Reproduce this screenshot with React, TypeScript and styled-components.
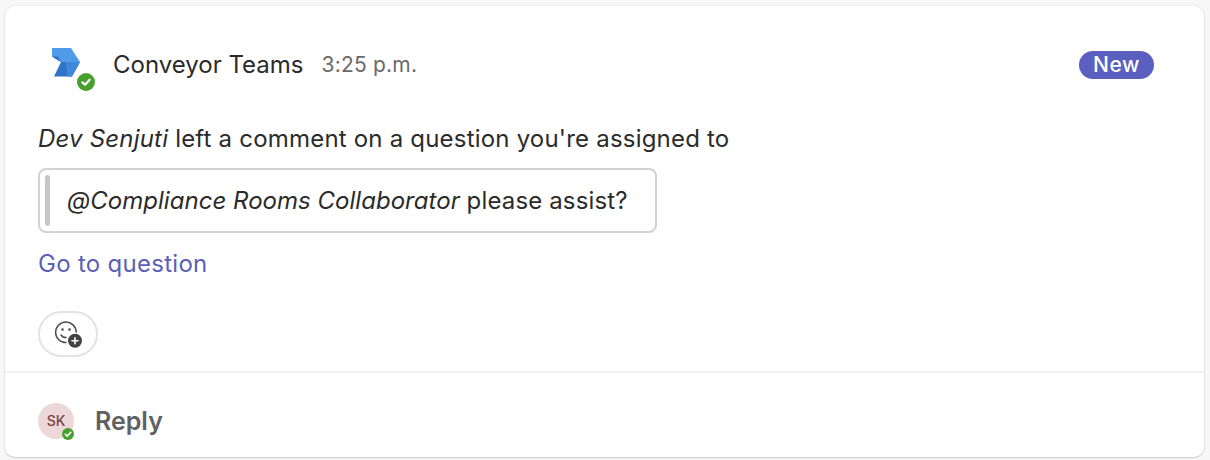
import React from "react";
import styled, { createGlobalStyle } from "styled-components";

const Global = createGlobalStyle`
  html, body { margin: 0; padding: 0; background: #f7f7f7; }
  body { font-family: Inter, "Liberation Sans", sans-serif; color: #262626; -webkit-font-smoothing: antialiased; }
`;

const Page = styled.div`
  width: 1210px;
  height: 460px;
  padding: 6px 6px 3px 5px;
  box-sizing: border-box;
  overflow: hidden;
`;

const Card = styled.article`
  height: 451px;
  background: #fff;
  border-radius: 10px;
  box-shadow: 0 0 2px rgba(0,0,0,.12), 0 1px 2px rgba(0,0,0,.14);
  display: flex;
  flex-direction: column;
`;

const Message = styled.section`
  height: 367px;
  box-sizing: border-box;
  padding: 38px 50px 0 33px;
  display: flex;
  flex-direction: column;
  align-items: flex-start;
  border-bottom: 2px solid #f0f0f0;
`;

const Header = styled.header`
  align-self: stretch;
  display: flex;
  align-items: center;
  height: 40px;
`;

const AppIcon = styled.div`
  position: relative;
  width: 75px;
  height: 48px;
  flex: none;
  margin-top: 6px;
  svg.logo { display: block; margin-left: 14px; margin-top: 5px; }
`;

const Presence = styled.span<{ $size: number }>`
  position: absolute;
  width: ${p => p.$size}px;
  height: ${p => p.$size}px;
  border-radius: 50%;
  background: #479f2e;
  display: flex;
  align-items: center;
  justify-content: center;
  svg { display: block; }
`;

const AppPresence = styled(Presence)`
  left: 39px;
  top: 30px;
`;

const Sender = styled.span`
  font-size: 24px;
  color: #2b2b2b;
`;

const Time = styled.span`
  font-size: 21px;
  color: #6a6a6a;
  margin-left: 18px;
  letter-spacing: 0.2px;
`;

const Badge = styled.span`
  margin: 1px 0 0 auto;
  width: 75px;
  height: 28px;
  border-radius: 14px;
  background: #5b5fc0;
  color: #fff;
  font-size: 21px;
  font-weight: 500;
  display: flex;
  align-items: center;
  justify-content: center;
  letter-spacing: 0.5px;
`;

const Body = styled.p`
  margin: 40px 0 0;
  font-size: 24px;
  line-height: 30px;
  color: #2b2b2b;
  letter-spacing: 0.2px;
`;

const Quote = styled.blockquote`
  margin: 14px 0 0;
  width: 619px;
  height: 65px;
  box-sizing: border-box;
  border: 2px solid #d2d2d2;
  border-radius: 8px;
  display: flex;
  align-items: center;
  padding: 5px 0 5px 5px;
  font-size: 24px;
  color: #2b2b2b;
  letter-spacing: 0.14px;
  em { letter-spacing: 0.03px; }
`;

const QuoteBar = styled.span`
  width: 5px;
  height: 100%;
  border-radius: 3px;
  background: #c7c7c7;
  flex: none;
  margin-right: 17px;
`;

const GoLink = styled.a`
  margin-top: 16px;
  font-size: 24px;
  line-height: 30px;
  color: #5b5fb5;
  text-decoration: none;
  letter-spacing: 0.28px;
`;

const ReactButton = styled.button`
  margin-top: 32px;
  width: 60px;
  height: 46px;
  padding: 0;
  border: 2px solid #e3e3e3;
  border-radius: 23px;
  background: #fff;
  display: flex;
  align-items: center;
  justify-content: center;
`;

const Footer = styled.footer`
  flex: 1;
  display: flex;
  align-items: center;
  padding: 11px 0 0 33px;
`;

const Avatar = styled.div`
  position: relative;
  width: 36px;
  height: 36px;
  border-radius: 50%;
  background: #eed7d8;
  color: #7e4045;
  font-size: 14px;
  font-weight: 500;
  display: flex;
  align-items: center;
  justify-content: center;
  flex: none;
`;

const AvatarPresence = styled(Presence)`
  right: 0;
  bottom: -1px;
`;

const ReplyLabel = styled.span`
  margin-left: 21px;
  font-size: 25px;
  font-weight: 600;
  color: #616161;
`;

const Check = ({ size }: { size: number }) => (
  <svg width={size} height={size} viewBox="0 0 10 10" fill="none" aria-hidden="true">
    <path d="M2.8 5.2 4.4 6.7 7.3 3.6" stroke="#fff" strokeWidth="1.4" strokeLinecap="round" strokeLinejoin="round" />
  </svg>
);

const Logo = () => (
  <svg className="logo" width="28" height="30" viewBox="0 0 28 30" aria-hidden="true">
    <path d="M0 0H19L28 14H9L0 8.5Z" fill="#4f9bea" />
    <path d="M0 8.5 9 14 6 8.5Z" fill="#2f6fc0" />
    <path d="M9 14H28L20 28.5H2Z" fill="#2f74c6" />
    <path d="M28 14 20 28.5H15L14 14Z" fill="#3f88da" />
  </svg>
);

const ReactIcon = () => (
  <svg width="30" height="30" viewBox="0 0 30 30" fill="none" aria-hidden="true">
    <path d="M13 23.6A10.3 10.3 0 1 1 23.2 13" stroke="#4d4d4d" strokeWidth="1.5" strokeLinecap="round" />
    <circle cx="9.5" cy="10.5" r="1.3" fill="#4d4d4d" />
    <circle cx="16.5" cy="10.5" r="1.3" fill="#4d4d4d" />
    <path d="M8 16C9.2 17.8 10.8 18.6 13 18.6" stroke="#4d4d4d" strokeWidth="1.5" strokeLinecap="round" />
    <circle cx="22" cy="21.7" r="7" fill="#424242" />
    <path d="M22 18.7V24.7M19 21.7H25" stroke="#fff" strokeWidth="1.6" strokeLinecap="round" />
  </svg>
);

export default function App() {
  return (
    <>
      <Global />
      <Page>
        <Card>
          <Message>
            <Header>
              <AppIcon>
                <Logo />
                <AppPresence $size={18}><Check size={16} /></AppPresence>
              </AppIcon>
              <Sender>Conveyor Teams</Sender>
              <Time>3:25 p.m.</Time>
              <Badge>New</Badge>
            </Header>
            <Body><em>Dev Senjuti</em> left a comment on a question you're assigned to</Body>
            <Quote>
              <QuoteBar />
              <span><em>@Compliance Rooms Collaborator</em> please assist?</span>
            </Quote>
            <GoLink href="#">Go to question</GoLink>
            <ReactButton aria-label="Add reaction"><ReactIcon /></ReactButton>
          </Message>
          <Footer>
            <Avatar>
              SK
              <AvatarPresence $size={12}><Check size={12} /></AvatarPresence>
            </Avatar>
            <ReplyLabel>Reply</ReplyLabel>
          </Footer>
        </Card>
      </Page>
    </>
  );
}
